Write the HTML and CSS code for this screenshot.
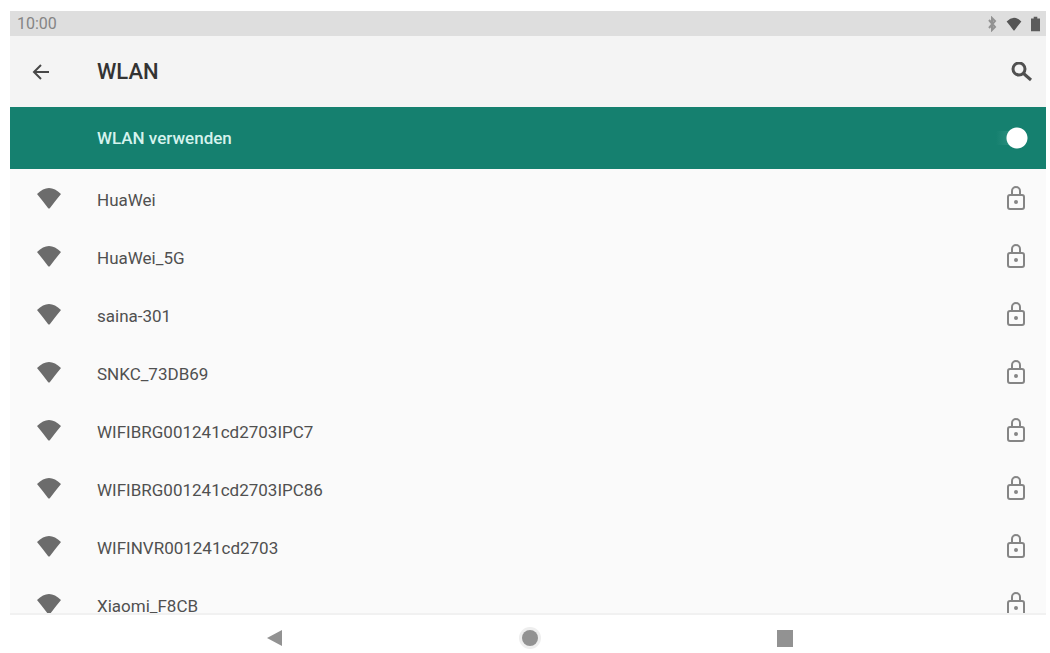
FILE: index.html
```html
<!DOCTYPE html>
<html lang="de">
  <head>
    <meta charset="utf-8">
    <title>WLAN</title>
    <link rel="stylesheet" href="styles.css">
  </head>
  <body>
    <svg class="defs" aria-hidden="true">
      <symbol id="wifi" viewBox="0 0 26 22">
        <path d="M1 7 Q13 -5 25 7 Q20 13 14 21 Q13 22 12 21 Q6 13 1 7Z" />
      </symbol>
      <symbol id="lock" viewBox="0 0 20 26">
        <path d="M6 10V6a4 4 0 0 1 8 0v4" />
        <rect x="2" y="10" width="16" height="14" rx="2" />
        <circle cx="10" cy="17" r="1" />
      </symbol>
    </svg>
    <div class="device">
      <div class="statusBar">
        <span class="clock">10:00</span>
        <div class="statusIcons">
          <svg class="bluetooth" viewBox="0 0 10 16"><path d="M2 4l6 7-3 3V2l3 3-6 7" /></svg>
          <svg class="statusWifi"><use href="#wifi" /></svg>
          <svg class="battery" viewBox="0 0 10 16"><path d="M3 0h4v2h3v14H0V2h3z" /></svg>
        </div>
      </div>
      <header class="appBar">
        <button class="iconButton" aria-label="Zurück">
          <svg class="back" viewBox="0 0 18 18"><path d="M17 9H3M9 2L2 9L9 16" /></svg>
        </button>
        <h1>WLAN</h1>
        <button class="iconButton search" aria-label="Suchen">
          <svg class="lens" viewBox="0 0 22 20"><circle cx="8" cy="7" r="6" /><path d="M12 11L20 18" /></svg>
        </button>
      </header>
      <div class="switchBar">
        <label for="useWlan">WLAN verwenden</label>
        <input type="checkbox" id="useWlan" class="switch" checked>
      </div>
      <ul class="networks">
        <li><svg class="wifi"><use href="#wifi" /></svg><a href="#">HuaWei</a><svg class="lock"><use href="#lock" /></svg></li>
        <li><svg class="wifi"><use href="#wifi" /></svg><a href="#">HuaWei_5G</a><svg class="lock"><use href="#lock" /></svg></li>
        <li><svg class="wifi"><use href="#wifi" /></svg><a href="#">saina-301</a><svg class="lock"><use href="#lock" /></svg></li>
        <li><svg class="wifi"><use href="#wifi" /></svg><a href="#">SNKC_73DB69</a><svg class="lock"><use href="#lock" /></svg></li>
        <li><svg class="wifi"><use href="#wifi" /></svg><a href="#">WIFIBRG001241cd2703IPC7</a><svg class="lock"><use href="#lock" /></svg></li>
        <li><svg class="wifi"><use href="#wifi" /></svg><a href="#">WIFIBRG001241cd2703IPC86</a><svg class="lock"><use href="#lock" /></svg></li>
        <li><svg class="wifi"><use href="#wifi" /></svg><a href="#">WIFINVR001241cd2703</a><svg class="lock"><use href="#lock" /></svg></li>
        <li><svg class="wifi"><use href="#wifi" /></svg><a href="#">Xiaomi_F8CB</a><svg class="lock"><use href="#lock" /></svg></li>
      </ul>
      <nav class="navBar">
        <button aria-label="Zurück"><svg viewBox="0 0 24 24"><path d="M4 12L19 4v16z" /></svg></button>
        <button aria-label="Startseite"><svg viewBox="0 0 24 24"><circle class="ring" cx="12" cy="12" r="11" /><circle cx="12" cy="12" r="8" /></svg></button>
        <button aria-label="Übersicht"><svg viewBox="0 0 24 24"><rect x="4" y="4" width="16" height="17" /></svg></button>
      </nav>
    </div>
  </body>
</html>
```

FILE: styles.css
```css
* {
  box-sizing: border-box;
  margin: 0;
  padding: 0;
}
body {
  height: 100vh;
  padding: 11px 4px 0 10px;
  background-color: white;
  color: #505050;
  font-family: Roboto, sans-serif;
  font-size: 17px;
}
svg {
  display: block;
  flex: none;
}
button {
  border: none;
  background: none;
}
.defs {
  display: none;
}
.device {
  height: 100%;
  display: flex;
  flex-direction: column;
}
.statusBar {
  height: 25px;
  flex: none;
  display: flex;
  align-items: center;
  justify-content: space-between;
  padding: 0 6px 0 7px;
  background-color: #dedede;
}
.clock {
  color: #858585;
  font-size: 16px;
}
.statusIcons {
  display: flex;
  align-items: center;
  gap: 9px;
}
.bluetooth {
  width: 10px;
  height: 16px;
  fill: none;
  stroke: #929292;
  stroke-width: 2;
}
.statusWifi {
  width: 16px;
  height: 16px;
  fill: #555555;
}
.battery {
  width: 9px;
  height: 16px;
  fill: #5c5c5c;
}
.appBar {
  height: 71px;
  flex: none;
  display: flex;
  align-items: center;
  padding: 0 13px 0 22px;
  background-color: #f4f4f4;
}
.iconButton {
  width: 65px;
}
.search {
  width: 22px;
  margin-left: auto;
}
.back {
  width: 18px;
  height: 18px;
  fill: none;
  stroke: #484848;
  stroke-width: 2;
}
.lens {
  width: 22px;
  height: 20px;
  fill: none;
  stroke: #505050;
  stroke-width: 3;
}
h1 {
  color: #333333;
  font-size: 22px;
  font-weight: 500;
}
.switchBar {
  height: 62px;
  flex: none;
  display: flex;
  align-items: center;
  justify-content: space-between;
  padding: 0 18px 0 87px;
  background-color: #15806f;
  color: #d5f3ed;
  font-weight: 500;
}
.switch {
  appearance: none;
  width: 36px;
  height: 22px;
  border-radius: 11px;
  background: radial-gradient(circle at 25px 11px, white 10px, transparent 11px),
    linear-gradient(to right, #15806f, #409b8c) center / 28px 14px no-repeat;
}
.networks {
  flex: 1;
  min-height: 0;
  overflow: hidden;
  list-style: none;
  border-bottom: 2px solid #f1f1f1;
  background-color: #fafafa;
}
.networks li {
  height: 58px;
  display: flex;
  align-items: center;
  padding: 0 20px 0 26px;
}
.networks a {
  flex: 1;
  padding: 4px 0 0 35px;
  color: inherit;
  text-decoration: none;
}
.wifi {
  width: 26px;
  height: 22px;
  fill: #6c6c6c;
}
.lock {
  width: 20px;
  height: 26px;
  fill: none;
  stroke: #858585;
  stroke-width: 2;
}
.navBar {
  height: 38px;
  flex: none;
  display: flex;
  justify-content: center;
  gap: 231px;
  align-items: center;
  padding: 8px 0 0 4px;
  background-color: white;
}
.navBar svg {
  width: 24px;
  height: 24px;
  fill: #929292;
}
.navBar .ring {
  fill: #eeeeee;
}
```
